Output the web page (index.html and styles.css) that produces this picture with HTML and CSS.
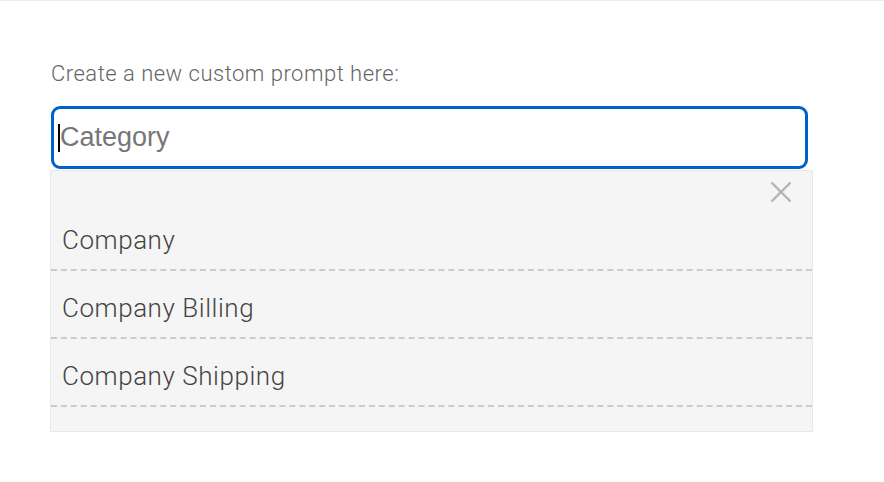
FILE: index.html
```html
<!DOCTYPE html>
<html>
<head>
<meta charset="utf-8">
<link rel="stylesheet" href="styles.css">
</head>
<body>
<div class="page">
  <div class="form">
    <label class="label">Create a new custom prompt here:</label>
    <div class="field">
      <div class="input"><span class="caret"></span><span class="placeholder">Category</span></div>
      <div class="dropdown">
        <div class="dropdown-head">
          <svg class="close" width="22" height="22" viewBox="0 0 22 22"><path d="M1.5 1.5 L20.5 20.5 M20.5 1.5 L1.5 20.5" stroke="#b4b4b4" stroke-width="2.4" fill="none"/></svg>
        </div>
        <ul class="options">
          <li class="option">Company</li>
          <li class="option">Company Billing</li>
          <li class="option">Company Shipping</li>
        </ul>
      </div>
    </div>
  </div>
</div>
</body>
</html>
```

FILE: styles.css
```css
html, body {
  margin: 0;
  padding: 0;
  background: #fff;
}
.page {
  border-top: 1px solid #ececec;
  width: 884px;
  height: 481px;
}
.form {
  padding: 58px 0 0 51px;
  display: flex;
  flex-direction: column;
}
.label {
  font-family: Roboto, "Liberation Sans", sans-serif;
  font-weight: 300;
  font-size: 22px;
  letter-spacing: 0.5px;
  line-height: 30px;
  color: #666;
}
.field {
  margin-top: 17px;
  width: 763px;
}
.input {
  box-sizing: border-box;
  width: 757px;
  height: 63px;
  border: 3px solid #0060d0;
  border-radius: 9px;
  display: flex;
  align-items: center;
  padding-left: 4px;
  font-family: "Liberation Sans", Arial, sans-serif;
  font-size: 27px;
}
.caret {
  display: inline-block;
  width: 2px;
  height: 28px;
  background: #000;
}
.placeholder {
  color: #767676;
}
.dropdown {
  margin-left: -1px;
  margin-top: 1px;
  box-sizing: border-box;
  width: 763px;
  background: #f5f5f5;
  border: 1px solid #e8e8e8;
  padding-bottom: 24px;
}
.dropdown-head {
  height: 32px;
  display: flex;
  justify-content: flex-end;
  align-items: flex-end;
  padding-right: 20px;
}
.close {
  display: block;
}
.options {
  list-style: none;
  margin: 0;
  padding: 0;
}
.option {
  height: 66px;
  line-height: 74px;
  padding-left: 11px;
  border-bottom: 2px dashed #cccccc;
  font-family: Roboto, "Liberation Sans", sans-serif;
  font-weight: 300;
  font-size: 26px;
  letter-spacing: 0.55px;
  color: #444;
}
```
